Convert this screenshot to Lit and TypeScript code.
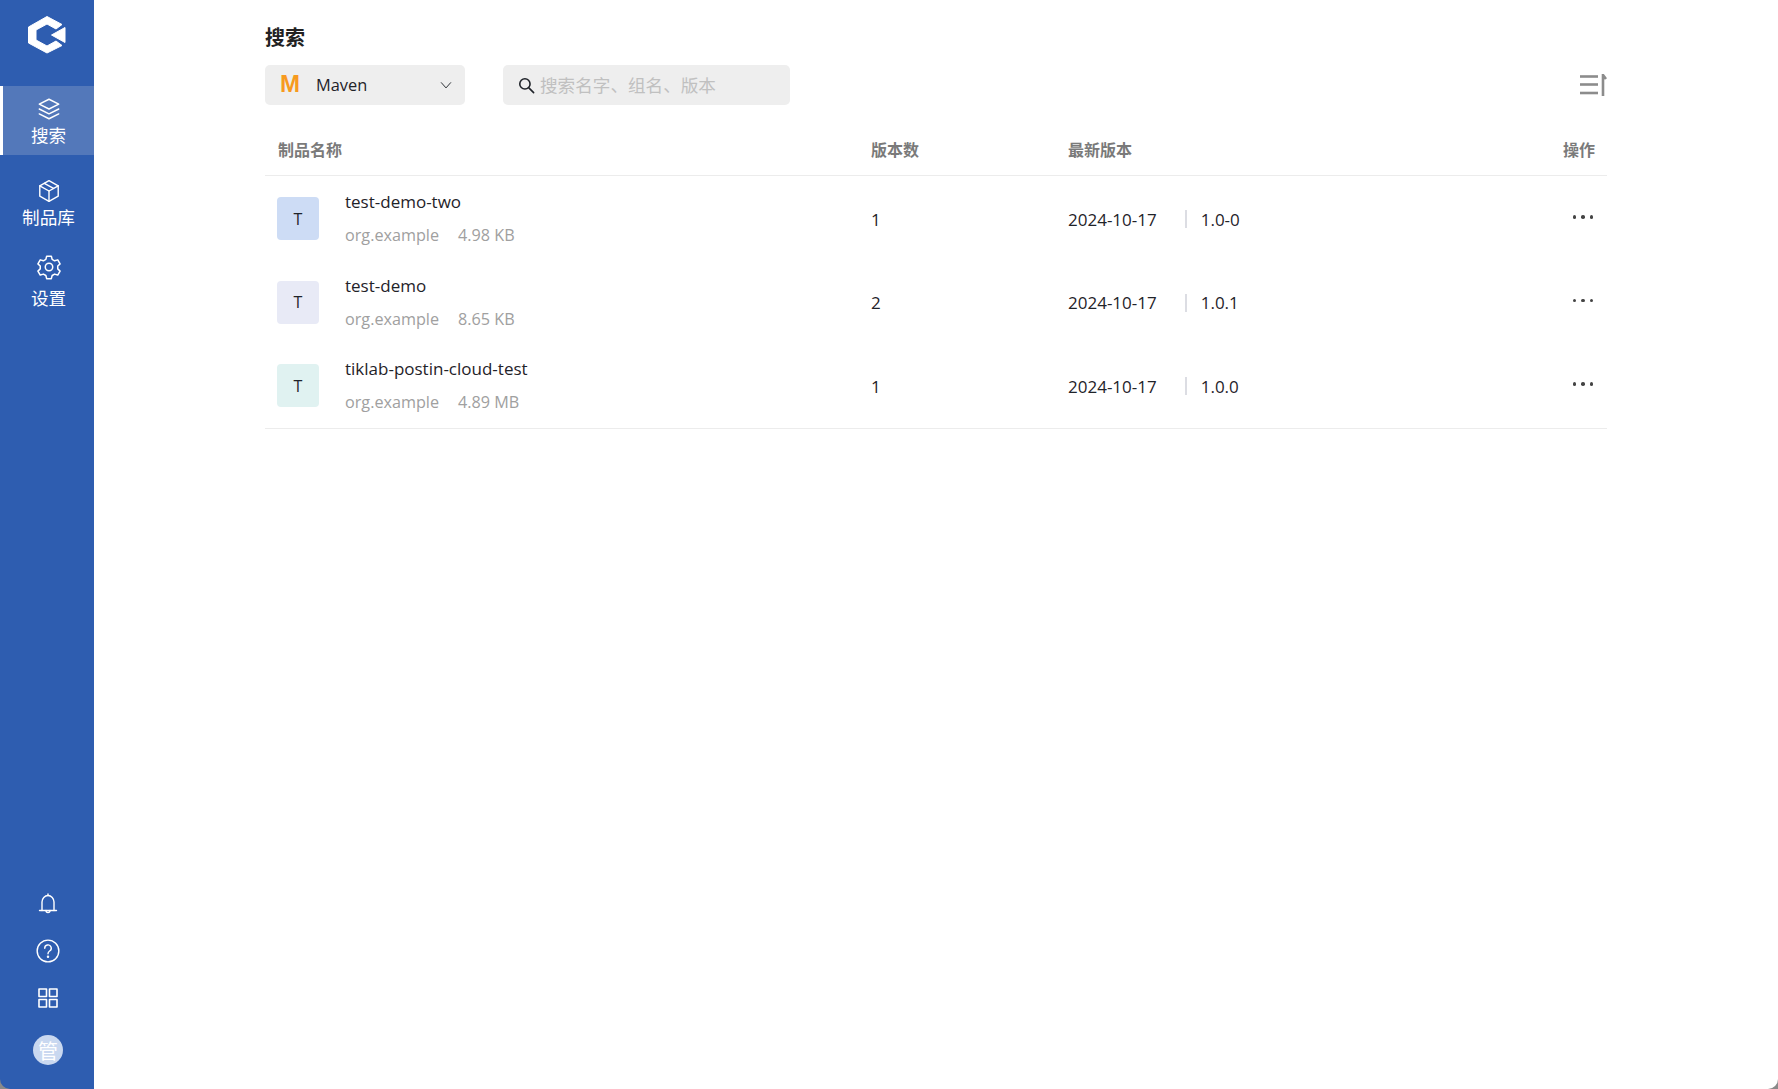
import { LitElement, html, css, svg } from "lit";
import { customElement } from "lit/decorators.js";

const rows = [
  { name: "test-demo-two", size: "4.98 KB", count: "1", date: "2024-10-17", ver: "1.0-0", cls: "blue" },
  { name: "test-demo", size: "8.65 KB", count: "2", date: "2024-10-17", ver: "1.0.1", cls: "violet" },
  { name: "tiklab-postin-cloud-test", size: "4.89 MB", count: "1", date: "2024-10-17", ver: "1.0.0", cls: "teal" },
];

const icon = (size: number, body: unknown, sw = 1.5) => html`<svg width=${size} height=${size} viewBox="0 0 24 24" fill="none" stroke="currentColor" stroke-width=${sw} stroke-linejoin="round" stroke-linecap="round">${body}</svg>`;

@customElement("app-root")
export class AppRoot extends LitElement {
  static styles = css`
    :host { display: block; height: 1089px; position: relative; overflow: hidden; background: #fff;
      font-family: "Open Sans", "Noto Sans CJK SC", sans-serif; color: #1f2329; }
    .page { display: flex; height: 100%; background: #8a8a8a; }
    .side { width: 94px; flex: none; background: #2e5db0; color: #fff; display: flex; flex-direction: column; border-bottom-left-radius: 10px; }
    .logo { height: 86px; display: flex; justify-content: center; padding-top: 15px; box-sizing: border-box; }
    .nav { height: 69px; display: flex; flex-direction: column; align-items: center; justify-content: center; font-size: 17.6px; line-height: 24px; margin-bottom: 13px; box-sizing: border-box; border-left: 3px solid transparent; padding-top: 1px; }
    .nav.active { background: #5378ba; border-left-color: #fff; }
    .nav svg { display: block; }
    .nav span { margin-top: 1px; }
    .nav.second { margin-bottom: 7px; }
    .nav.third { padding-top: 3px; }
    .nav.third svg { margin-top: 2px; }
    .nav.third span { margin-top: 5px; }
    .spacer { flex: 1; }
    .bottom { display: flex; flex-direction: column; align-items: center; padding: 0 0 24px 2px; }
    .bi { height: 47px; display: flex; align-items: center; justify-content: center; }
    .avatar { width: 30px; height: 30px; border-radius: 50%; background: #c9d8f0; color: #fff; display: flex; align-items: center; justify-content: center; font-size: 20px; margin-top: 14px; }
    .main { flex: 1; padding: 24px 171px 0 171px; min-width: 0; background: #fff; border-bottom-right-radius: 10px; }
    h1 { margin: 0; font-size: 20px; line-height: 28px; font-weight: 700; color: #222; }
    .tools { display: flex; align-items: center; margin-top: 13px; height: 40px; }
    .select { width: 200px; height: 40px; border-radius: 5px; background: #eeeeee; display: flex; align-items: center; box-sizing: border-box; padding: 0 12px 2px 15px; font-size: 16.4px; }
    .m { color: #f79a1e; font-size: 24px; font-weight: 700; width: 36px; font-family: "Liberation Sans", sans-serif; }
    .select .label { flex: 1; }
    .select svg { margin-top: 2px; }
    .search { width: 287px; height: 40px; margin-left: 38px; border-radius: 5px; background: #eeeeee; display: flex; align-items: center; gap: 4px; padding: 0 14px 2px; box-sizing: border-box; color: #c0c0c0; font-size: 17.6px; }
    .search svg { color: #1f2329; flex: none; margin-top: 2px; }
    .sort { margin-left: auto; color: #8c8c8c; display: flex; }
    .row { display: grid; grid-template-columns: 594px 197px 1fr 60px; align-items: center; }
    .head { margin-top: 15px; border-bottom: 1px solid #ececec; font-size: 16px; font-weight: 700; color: #7a7a7a; padding: 2px 0 0 13px; box-sizing: border-box; height: 56px; grid-template-columns: 593px 197px 1fr 60px; }
    .head .last { text-align: right; padding-right: 12px; }
    .item { height: 83.6px; padding-left: 12px; font-size: 17px; }
    .name { display: flex; align-items: center; gap: 26px; margin-top: -1px; }
    .ava { width: 42px; height: 43px; border-radius: 4px; display: flex; align-items: center; justify-content: center; font-size: 16px; }
    .blue { background: #cddcf5; } .violet { background: #e8eaf6; } .teal { background: #e0f2f1; }
    .title { line-height: 24px; }
    .sub { display: flex; gap: 19px; color: #a0a0a0; line-height: 24px; margin-top: 9px; font-size: 16.2px; }
    .ver { display: flex; align-items: center; }
    .sep { width: 2px; height: 18px; background: #dcdde3; margin: 0 14px 0 28px; }
    .more { display: flex; justify-content: flex-end; gap: 5px; padding-right: 14px; margin-top: -5px; }
    .more i { width: 3.5px; height: 3.5px; border-radius: 50%; background: #444; }
    .list { border-bottom: 1px solid #ececec; height: 253px; box-sizing: border-box; padding-top: 1.5px; }
  `;

  render() {
    return html`<div class="page">
      <aside class="side">
        <div class="logo">
          <svg width="40" height="40" viewBox="27 15 40 40" fill="#fff" stroke="#fff" stroke-width="1" stroke-linejoin="round"><path d="M47 16.5 L62 24.5 L56 29 L47 24 L36 30 L36 40 L47 46 L56 41 L62 45.5 L47 53 L28.5 43 L28.5 27 Z"/><path d="M65 27.5 V42.5 L51.5 35 Z"/></svg>
        </div>
        <div class="nav active">
          ${icon(26, svg`<path d="M12 3 L21 7.5 L12 12 L3 7.5 Z"/><path d="M3 12 L12 16.5 L21 12"/><path d="M3 16.5 L12 21 L21 16.5"/>`, 1.3)}
          <span>搜索</span>
        </div>
        <div class="nav second">
          ${icon(26, svg`<path d="M12 2.5 L20.5 7.2 V16.8 L12 21.5 L3.5 16.8 V7.2 Z"/><path d="M3.5 7.2 L12 12 L20.5 7.2"/><path d="M12 12 V21.5"/><path d="M7.7 4.9 L16.2 9.6"/>`, 1.3)}
          <span>制品库</span>
        </div>
        <div class="nav third">
          ${icon(28, svg`<circle cx="12" cy="12" r="3.2"/><path d="M10 2.8 h4 l.7 2.7 2.1 1.2 2.7-.8 2 3.4-2 1.9 v2.4 l2 1.9-2 3.4-2.7-.8-2.1 1.2-.7 2.7 h-4 l-.7-2.7-2.1-1.2-2.7.8-2-3.4 2-1.9 v-2.4 l-2-1.9 2-3.4 2.7.8 2.1-1.2 Z"/>`, 1.3)}
          <span>设置</span>
        </div>
        <div class="spacer"></div>
        <div class="bottom">
          <div class="bi">${icon(24, svg`<path d="M12 2 V3.5"/><path d="M6 18.5 V10 A6 6.5 0 0 1 18 10 V18.5"/><path d="M3.5 18.5 H20.5"/><path d="M10 18.5 A2 2 0 0 0 14 18.5"/>`, 1.4)}</div>
          <div class="bi">${icon(26, svg`<circle cx="12" cy="12" r="10"/><path d="M9 9.5 A3 3 0 1 1 13.5 12 C12.5 12.6 12 13 12 14.5"/><circle cx="12" cy="17.3" r=".5"/>`, 1.3)}</div>
          <div class="bi">${icon(24, svg`<rect x="3" y="3" width="7.5" height="7.5"/><rect x="13.5" y="3" width="7.5" height="7.5"/><rect x="3" y="13.5" width="7.5" height="7.5"/><rect x="13.5" y="13.5" width="7.5" height="7.5"/>`, 1.6)}</div>
          <div class="avatar">管</div>
        </div>
      </aside>
      <main class="main">
        <h1>搜索</h1>
        <div class="tools">
          <div class="select">
            <span class="m">M</span><span class="label">Maven</span>
            ${icon(14, svg`<path d="M4 8 L12 17 L20 8"/>`, 1.6)}
          </div>
          <div class="search">
            ${icon(19, svg`<circle cx="10" cy="10" r="6.5"/><path d="M15 15 L21 21"/>`, 2)}
            <span>搜索名字、组名、版本</span>
          </div>
          <div class="sort">
            <svg width="27" height="22" viewBox="0 0 27 22" fill="none" stroke="currentColor" stroke-width="2.6"><path d="M0 2.5 H18"/><path d="M0 10.5 H18"/><path d="M0 19 H18"/><path d="M23 22 V1 L26 5"/></svg>
          </div>
        </div>
        <div class="row head"><div>制品名称</div><div>版本数</div><div>最新版本</div><div class="last">操作</div></div>
        <div class="list">
          ${rows.map((r) => html`<div class="row item">
            <div class="name">
              <div class="ava ${r.cls}">T</div>
              <div>
                <div class="title">${r.name}</div>
                <div class="sub"><span>org.example</span><span>${r.size}</span></div>
              </div>
            </div>
            <div>${r.count}</div>
            <div class="ver"><span>${r.date}</span><span class="sep"></span><span>${r.ver}</span></div>
            <div class="more"><i></i><i></i><i></i></div>
          </div>`)}
        </div>
      </main>
    </div>`;
  }
}
